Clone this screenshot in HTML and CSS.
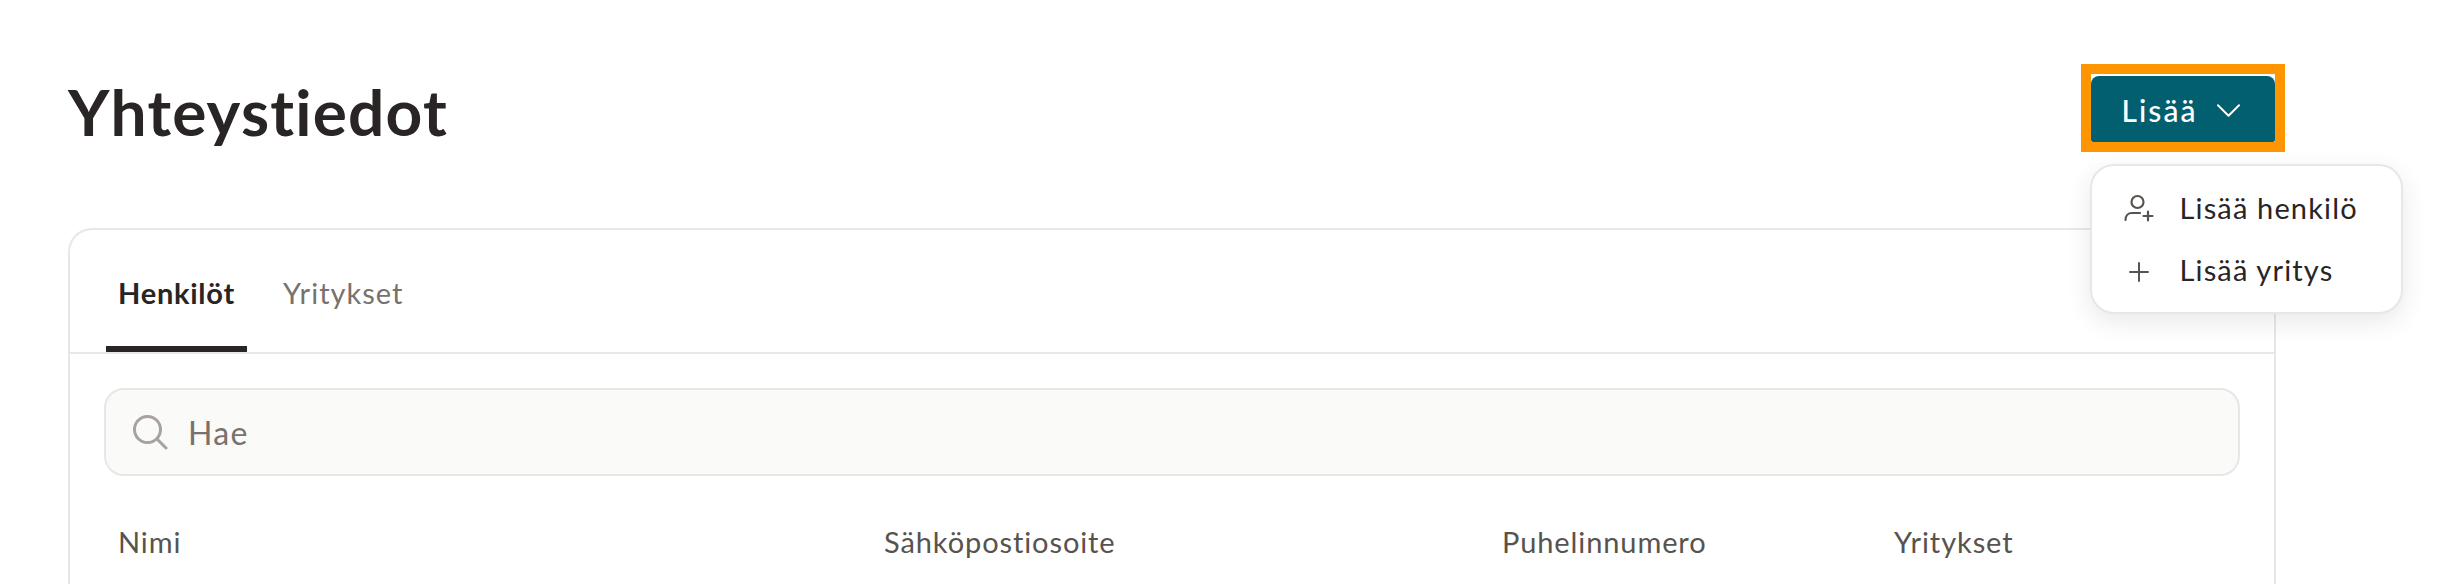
FILE: index.html
```html
<!DOCTYPE html>
<html lang="fi">
<head>
<meta charset="utf-8">
<title>Yhteystiedot</title>
<link rel="stylesheet" href="styles.css">
</head>
<body>
<main class="page">
  <header class="head">
    <h1 class="title">Yhteystiedot</h1>
    <div class="add">
      <div class="focus">
        <button class="btn" type="button">
          <span>Lisää</span>
          <svg class="chev" viewBox="0 0 24 24" fill="none" stroke="currentColor" stroke-width="2" stroke-linecap="round" stroke-linejoin="round"><path d="M1 6.500l11 11 11-11"/></svg>
        </button>
      </div>
      <div class="menu">
        <div class="item">
          <svg class="ico" viewBox="0 0 32 32" width="32" height="32" fill="none" stroke="currentColor" stroke-width="2.200" stroke-linecap="round"><circle cx="13.500" cy="9" r="6"/><path d="M1.500 27c0-4 2.500-7 6.500-7h8"/><path d="M24 18.500v9M19.500 23h9"/></svg>
          <span class="item-label">Lisää henkilö</span>
        </div>
        <div class="item">
          <svg class="ico" viewBox="0 0 32 32" width="32" height="32" fill="none" stroke="currentColor" stroke-width="2" stroke-linecap="round"><path d="M15 8v18M6 17h18"/></svg>
          <span class="item-label">Lisää yritys</span>
        </div>
      </div>
    </div>
  </header>
  <section class="card">
    <nav class="tabs">
      <a class="tab tab-on">Henkilöt</a>
      <a class="tab">Yritykset</a>
    </nav>
    <div class="body">
      <div class="search">
        <svg class="search-ico" viewBox="0 0 36 36" width="36" height="36" fill="none" stroke="currentColor" stroke-width="3" stroke-linecap="round"><circle cx="15.500" cy="15.500" r="13"/><path d="M25 25l9 9"/></svg>
        <span>Hae</span>
      </div>
      <div class="cols">
        <span>Nimi</span>
        <span>Sähköpostiosoite</span>
        <span>Puhelinnumero</span>
        <span>Yritykset</span>
      </div>
    </div>
  </section>
</main>
</body>
</html>
```

FILE: styles.css
```css
* { box-sizing: border-box; }
html, body { margin: 0; height: 584px; overflow: hidden; background: #fff; }
body { font-family: "Lato", "Noto Sans", sans-serif; font-variant-ligatures: none; color: #292524; }
.page { width: 2208px; margin-left: 68px; }
.head { display: flex; justify-content: space-between; align-items: flex-start; padding-top: 64px; height: 228px; }
.title { margin: 16px 0 0; font-size: 64px; line-height: 64px; font-weight: 700; letter-spacing: 1.2px; }
.add { position: relative; margin-right: -9px; }
.focus { width: 204px; height: 88px; border: 10px solid #ff9500; padding-top: 2px; background: #fff; }
.btn { width: 100%; height: 100%; display: flex; align-items: center; justify-content: center; gap: 20px; padding: 2px 4px 0 0; border: 0; border-radius: 8px 8px 2px 2px; background: #025f70; color: #fff; font: 500 30px/1 "Lato", sans-serif; font-variant-ligatures: none; letter-spacing: 2px; }
.chev { width: 23px; height: 23px; }
.menu { position: absolute; top: 100px; left: 9px; width: 313px; height: 150px; padding: 12px 0; border: 2px solid #e7e7e5; border-radius: 24px; background: #fff; box-shadow: 0 8px 24px rgba(41,37,36,.10); z-index: 2; }
.item { display: flex; align-items: center; height: 62px; padding-left: 32px; gap: 23.500px; font-size: 29px; letter-spacing: 1.15px; }
.item-label { padding-bottom: 3px; }
.ico { color: #57534e; }
.card { height: 356px; border: 2px solid #e7e7e5; border-bottom: 0; border-radius: 24px 24px 0 0; }
.tabs { display: flex; height: 124px; padding-left: 36px; gap: 24px; border-bottom: 2px solid #e7e7e5; }
.tab { display: flex; align-items: center; height: 122px; padding: 9px 12px 0; font-size: 29px; letter-spacing: 1px; color: #78716c; border-bottom: 6px solid transparent; }
.tab-on { color: #292524; font-weight: 700; letter-spacing: .75px; border-bottom-color: #292524; }
.body { padding: 34px 34px 0; }
.search { display: flex; align-items: center; gap: 20px; height: 88px; padding-left: 26px; border: 2px solid #e7e7e5; border-radius: 20px; background: #fafaf8; font-size: 32px; letter-spacing: 1.3px; color: #78716c; }
.search-ico { color: #a8a29e; }
.cols { display: grid; grid-template-columns: 766px 618px 392px 1fr; padding: 48px 0 0 14px; font-size: 29px; line-height: 36px; letter-spacing: .9px; color: #57534e; }
```
